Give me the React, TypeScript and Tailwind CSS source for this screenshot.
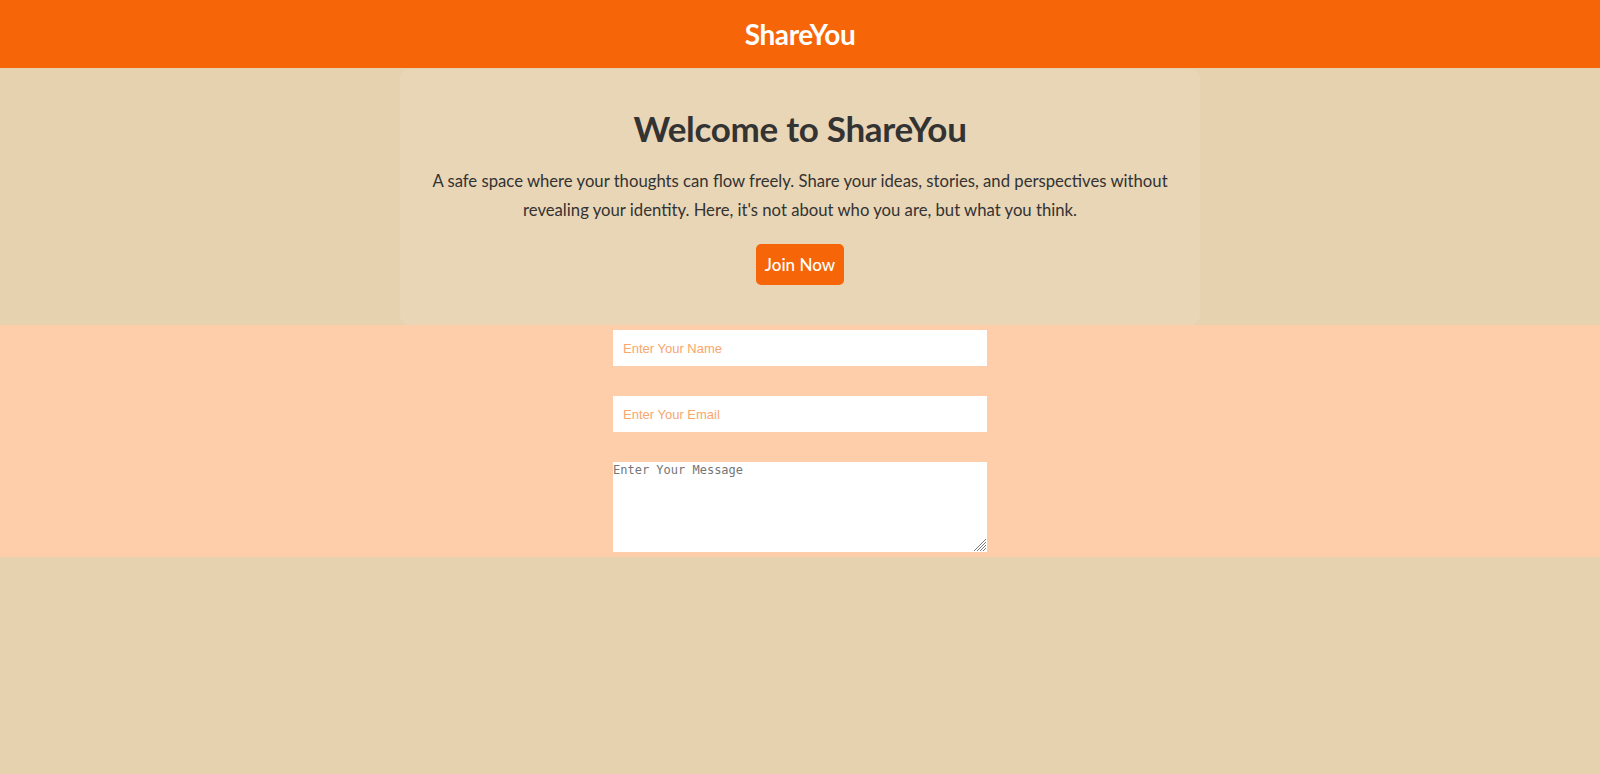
import React from "react";

export default function App() {
  const font = { fontFamily: '"Lato", "Open Sans", sans-serif' };
  return (
    <div className="min-h-screen bg-[#e7d2b0]" style={font}>
      <header className="h-[68px] bg-[#f66608] flex items-center justify-center">
        <h1 className="text-white font-bold text-[28px] leading-none tracking-[-0.4px]">ShareYou</h1>
      </header>
      <section className="pt-px pb-0">
        <div className="mx-auto w-[800px] rounded-[10px] bg-[#e9d6b6] px-8 pt-[39px] pb-10 text-center">
          <h2 className="text-[35px] leading-[40px] font-bold text-[#333333] tracking-[-0.3px]">Welcome to ShareYou</h2>
          <p className="mt-[19px] text-[16.7px] leading-[28.6px] text-[#333333]">
            A safe space where your thoughts can flow freely. Share your ideas, stories, and perspectives without
            <br />
            revealing your identity. Here, it's not about who you are, but what you think.
          </p>
          <button className="mt-[20px] h-[41px] w-[88px] rounded-[5px] bg-[#f66608] text-white text-[17px] font-medium">Join Now</button>
        </div>
      </section>
      <section className="bg-[#fecdaa] flex flex-col items-center pt-[5px] pb-[5px] gap-[30px]">
        <input
          type="text"
          placeholder="Enter Your Name"
          className="w-[374px] h-[36px] bg-white px-[10px] text-[13px] outline-none placeholder:text-[#f9a66c]"
          style={{ fontFamily: '"Liberation Sans", Arial, sans-serif' }}
        />
        <input
          type="email"
          placeholder="Enter Your Email"
          className="w-[374px] h-[36px] bg-white px-[10px] text-[13px] outline-none placeholder:text-[#f9a66c]"
          style={{ fontFamily: '"Liberation Sans", Arial, sans-serif' }}
        />
        <div className="relative w-[374px] h-[90px]">
          <textarea
            placeholder="Enter Your Message"
            className="w-full h-full bg-white p-0 text-[12px] leading-[16px] outline-none resize-none placeholder:text-[#757575] block"
            style={{ fontFamily: '"DejaVu Sans Mono", monospace' }}
          />
          <svg className="absolute right-[1px] bottom-[1px] pointer-events-none" width="13" height="13" viewBox="0 0 13 13">
            <g stroke="#7a7a7a" strokeWidth="1">
              <line x1="13" y1="1" x2="1" y2="13" />
              <line x1="13" y1="4" x2="4" y2="13" />
              <line x1="13" y1="7" x2="7" y2="13" />
              <line x1="13" y1="10" x2="10" y2="13" />
            </g>
          </svg>
        </div>
      </section>
    </div>
  );
}
